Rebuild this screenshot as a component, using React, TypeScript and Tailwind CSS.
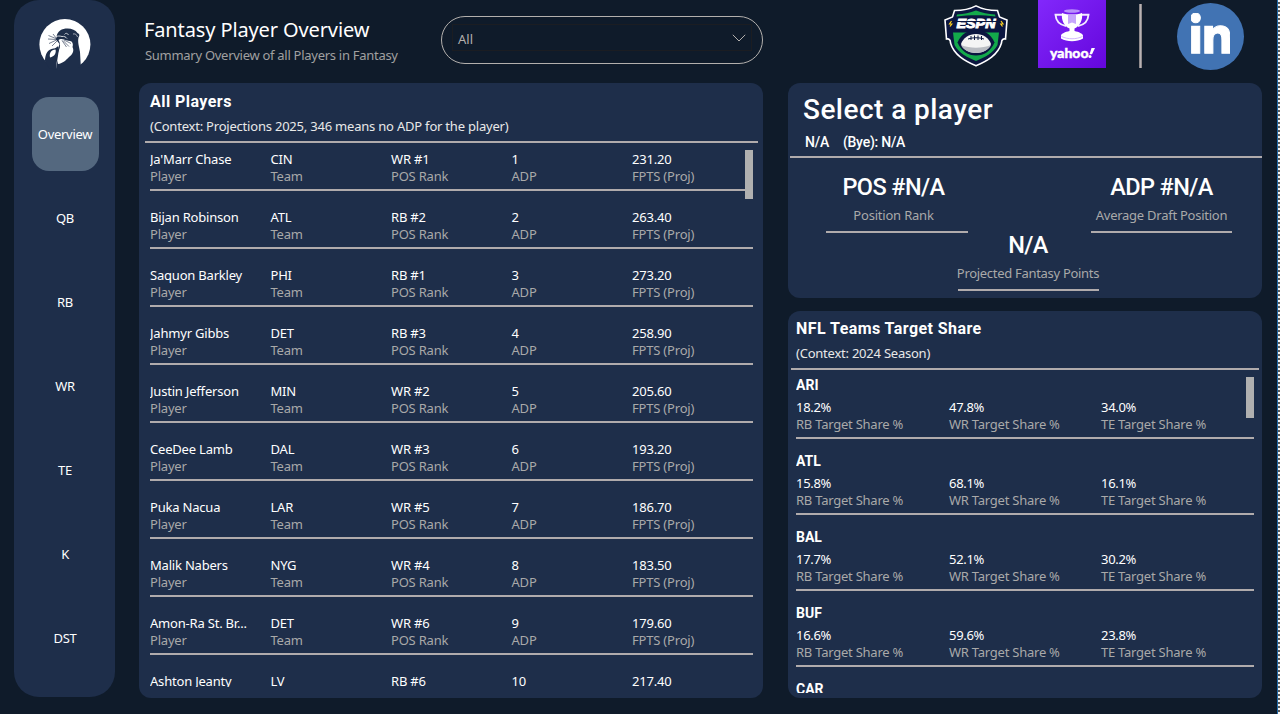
import React from "react";
import { FaLinkedinIn } from "react-icons/fa";

const players = [
  ["Ja'Marr Chase", "CIN", "WR #1", "1", "231.20"],
  ["Bijan Robinson", "ATL", "RB #2", "2", "263.40"],
  ["Saquon Barkley", "PHI", "RB #1", "3", "273.20"],
  ["Jahmyr Gibbs", "DET", "RB #3", "4", "258.90"],
  ["Justin Jefferson", "MIN", "WR #2", "5", "205.60"],
  ["CeeDee Lamb", "DAL", "WR #3", "6", "193.20"],
  ["Puka Nacua", "LAR", "WR #5", "7", "186.70"],
  ["Malik Nabers", "NYG", "WR #4", "8", "183.50"],
  ["Amon-Ra St. Br...", "DET", "WR #6", "9", "179.60"],
  ["Ashton Jeanty", "LV", "RB #6", "10", "217.40"],
];
const playerLabels = ["Player", "Team", "POS Rank", "ADP", "FPTS (Proj)"];

const teams = [
  ["ARI", "18.2%", "47.8%", "34.0%"],
  ["ATL", "15.8%", "68.1%", "16.1%"],
  ["BAL", "17.7%", "52.1%", "30.2%"],
  ["BUF", "16.6%", "59.6%", "23.8%"],
  ["CAR"],
];
const teamLabels = ["RB Target Share %", "WR Target Share %", "TE Target Share %"];

const nav = ["Overview", "QB", "RB", "WR", "TE", "K", "DST"];

function OtterLogo() {
  return (
    <svg className="h-[52px] w-[52px]" viewBox="0 0 52 52">
      <circle cx="25.900" cy="26.500" r="25.500" fill="#fff" />
      <path
        d="M17.500 19C18 13 23 10.500 28.500 10.500C33 10.500 36.500 12 38.500 15C40.500 15.500 41 17.500 39.500 19.500C38.500 24 40 28 41 34L41.800 48L36 52H18L17.700 44C17.500 37 19 31 20.500 26L17 21.500Z"
        fill="#1e2e4a"
      />
      <path
        d="M19.500 22C21 20.500 23 21 25 21.500C28 22.500 31 23 32.500 23.500C34 25 34.200 27 33.500 29C35.500 33 33.500 36.500 30 39C27 42 24 45.500 19 46C17.500 42 18 37 20 32C21.500 29 21.500 25.500 19.500 22Z"
        fill="#fff"
      />
      <path d="M6 43C6 36 9 31 14.500 30.500C18 31 17.500 27.500 19.500 29C20 33 19 38 17.500 45L18 52L10 50Z" fill="#1e2e4a" />
      <path d="M11 39.500C10 35.500 12 31.800 16.500 31.500C17.500 35 15.500 38.500 11 39.500Z" fill="#fff" />
      <path d="M17 19C18.500 17.500 21 18 23 18.500C25 18 27 19 28 20.500" stroke="#fff" strokeWidth=".8" fill="none" />
      <path
        d="M18 21L9.500 17.500M17.500 21.500L9 21M17.500 22L10 25.500M18.500 22.500L13 28M17.500 20.500L14 16M25 22L32 25.500M24 22.500L30 28.500M23 22.500L27.500 29"
        stroke="#1e2e4a"
        strokeWidth=".6"
        fill="none"
      />
      <path d="M25.500 16.500C26.500 14.800 28.500 15 29.500 17" stroke="#fff" strokeWidth=".7" fill="none" />
      <path d="M34 16C36 15.500 38 16.500 38.500 19" stroke="#fff" strokeWidth=".6" fill="none" />
    </svg>
  );
}

function EspnLogo() {
  return (
    <svg className="h-[62px] w-[66px]" viewBox="0 0 66 62">
      <path
        d="M33 .9C39 4 47 5.500 54.500 5.500L56.500 12L64 15L62.500 34C60 33.500 58.500 35 58.500 38C55 50 44 56 33 60.800C22 56 11 50 7.500 38C7.500 35 6 33.500 3.500 34L2 15L9.500 12L11.500 5.500C19 5.500 27 4 33 .9Z"
        fill="#0b1640"
        stroke="#fff"
        strokeWidth="1.600"
      />
      <path d="M14 9.500C21 9 27 8 33 5.500C39 8 45 9 52 9.500L52.500 11.500C40 9.800 26 9.800 13.500 11.500Z" fill="#13a94b" />
      <path d="M10 27.500H56L54.500 40C50 48.500 42 52 33 56C24 52 16 48.500 11.500 40Z" fill="#13a94b" />
      <path d="M14.500 37.500C18 29 25 25 33 25C41 25 48 29 51.500 37.500C48 46 41 50.500 33 50.500C25 50.500 18 46 14.500 37.500Z" fill="#0b1640" />
      <path d="M18 39C20 33 26 29 33 29C40 29 46 33 48 39C46 44.500 40 48 33 48C26 48 20 44.500 18 39Z" fill="#f4f4f4" />
      <path d="M18 40C27 43.500 39 43.500 48 40C46 44.500 40 48 33 48C26 48 20 44.500 18 40Z" fill="#b9bcc2" />
      <path d="M25 34C30 32.300 36 32.300 41 34M28 31V35M31.500 30.500V35M35 30.500V35M38.500 31V35" stroke="#0b1640" strokeWidth="1" fill="none" />
      <path d="M10 12.500H56L57 26.500C41 23.500 25 23.500 9 26.500Z" fill="#0b1640" />
      <text
        x="33"
        y="22.500"
        textAnchor="middle"
        fontFamily="Liberation Sans, sans-serif"
        fontStyle="italic"
        fontWeight="700"
        fontSize="13"
        textLength="39"
        lengthAdjust="spacingAndGlyphs"
        fill="#fff"
        stroke="#fff"
        strokeWidth=".9"
      >
        ESPN
      </text>
      <path d="M13 16.500H54" stroke="#0b1640" strokeWidth="1" />
      <path d="M8.500 16L6.500 19H8.800L7 21.500M58 16L60 19H57.800L59.500 21.500" stroke="#ffd21f" strokeWidth="1.200" fill="none" />
    </svg>
  );
}

function YahooLogo() {
  return (
    <svg className="h-[68px] w-[68px]" viewBox="0 0 68 68">
      <defs>
        <linearGradient id="violet" x1="0" y1="0" x2="1" y2="1">
          <stop offset="0" stopColor="#8228fb" />
          <stop offset="1" stopColor="#6406dc" />
        </linearGradient>
      </defs>
      <rect width="68" height="68" fill="url(#violet)" />
      <ellipse cx="34" cy="11" rx="8" ry="1.700" fill="#b992fb" />
      <path d="M24.500 14.800H17.500C18 22 22 25 28 26M43.500 14.800H50.500C50 22 46 25 40 26" fill="none" stroke="#f3ecff" strokeWidth="1.900" />
      <path d="M24 13C30 15 38 15 44 13C45 20 42 26 36.500 28.500V31C41 32 44.500 33.500 45 35.500V38.500C39 42 29 42 23 38.500V35.500C23.500 33.500 27 32 31.500 31V28.500C26 26 23 20 24 13Z" fill="#fff" />
      <path d="M30 14.500H38V24L34 22.500L30 24Z" fill="#c6a6fc" />
      <path d="M23.500 36.500C30 39.500 38 39.500 44.500 36.500" stroke="#c6a6fc" strokeWidth=".8" fill="none" />
      <text
        x="12"
        y="57.500"
        fontFamily="Lato, sans-serif"
        fontWeight="900"
        fontSize="13.500"
        textLength="38.500"
        lengthAdjust="spacingAndGlyphs"
        fill="#fff"
        stroke="#fff"
        strokeWidth=".4"
      >
        yahoo
      </text>
      <path d="M53.500 48H57L54 54.300H51.500Z" fill="#fff" />
      <circle cx="52" cy="56.500" r="1.500" fill="#fff" />
    </svg>
  );
}

function Stat({ value, label, className }: { value: string; label: string; className: string }) {
  return (
    <div className={"flex h-[62px] flex-col items-center border-b-2 border-[#b0abac] " + className}>
      <div className="mt-px font-[Roboto,sans-serif] text-[23.5px] leading-[30px] font-medium tracking-[-0.6px] text-white">{value}</div>
      <div className="mt-[5px] text-[13px] leading-[17px] whitespace-nowrap text-[#a9a9a9]">{label}</div>
    </div>
  );
}

export default function App() {
  return (
    <div className="flex h-[714px] w-[1280px] overflow-hidden bg-[#0f1b2a] font-['Noto_Sans',sans-serif] text-[13px] text-white">
      <nav className="ml-[14px] flex h-[697px] w-[101px] shrink-0 flex-col items-center rounded-[25px] bg-[#1e2e4a] pt-[18px]">
        <OtterLogo />
        <div className="mt-[27px] ml-px flex flex-col gap-[10px]">
          {nav.map((n, i) => (
            <button
              key={n}
              className={
                "flex h-[74px] w-[67px] items-center justify-center rounded-[17px] pt-[2px] text-[13px] tracking-[-0.3px] " +
                (i === 0 ? "bg-[#54687f]" : "")
              }
            >
              {n}
            </button>
          ))}
        </div>
      </nav>

      <div className="ml-6 flex w-[624px] shrink-0 flex-col">
        <header className="flex h-[83px] shrink-0 justify-between">
          <div className="pt-[15px] pl-[5px]">
            <h1 className="text-[20px] leading-[30px] tracking-[-0.12px] whitespace-nowrap">Fantasy Player Overview</h1>
            <p className="mt-[2px] pl-px text-[13px] leading-[17px] tracking-[-0.28px] whitespace-nowrap text-[#a0a0a0]">
              Summary Overview of all Players in Fantasy
            </p>
          </div>
          <div className="mt-4 flex h-12 w-[322px] rounded-[24px] border border-[#b3b0ad] px-[10px] pt-[7px]">
            <div className="flex h-[27px] w-full items-center justify-between border border-[#1b1d22] pr-[5px] pl-[5px] text-[#b3b0ad]">
              <span className="pt-[4px]">All</span>
              <svg className="h-[8px] w-[14px]" viewBox="0 0 14 8" fill="none" stroke="#b3b0ad">
                <path d="M.8 .8L7 7L13.200 .8" />
              </svg>
            </div>
          </div>
        </header>

        <section className="flex h-[615px] flex-col rounded-xl bg-[#1e2e4a]">
          <div className="mr-[5px] ml-[6px] h-[60px] shrink-0 border-b-2 border-[#b0abac] pt-[9px] pl-[5px]">
            <h2 className="font-[Roboto,sans-serif] text-[16px] leading-5 font-bold tracking-[0.45px]">All Players</h2>
            <p className="mt-[6px] leading-[17px] tracking-[-0.21px] text-[#e8e8e8]">
              (Context: Projections 2025, 346 means no ADP for the player)
            </p>
          </div>
          <div className="relative mr-[10px] ml-[11px] h-[544px] overflow-hidden pt-[8px]">
            {players.map((p) => (
              <div key={p[0]} className="mb-[18px] grid h-10 grid-cols-[120.5px_120.5px_120.5px_120.5px_1fr] border-b-2 border-[#b0abac]">
                {p.map((v, i) => (
                  <div key={i} className="leading-[17px] whitespace-nowrap">
                    <div className="tracking-[-0.2px]">{v}</div>
                    <div className="tracking-[-0.2px] text-[#a9a9a9]">{playerLabels[i]}</div>
                  </div>
                ))}
              </div>
            ))}
            <div className="absolute top-[7px] right-0 h-[49px] w-2 bg-[#b0b0b0]" />
          </div>
        </section>
      </div>

      <div className="ml-[25px] flex w-[474px] shrink-0 flex-col">
        <header className="flex h-[83px] shrink-0">
          <div className="ml-[155px] pt-[5px]">
            <EspnLogo />
          </div>
          <div className="ml-[29px]">
            <YahooLogo />
          </div>
          <div className="mt-1 ml-[33px] h-16 w-[3px] border-x border-[#8f8a8c] bg-[#b8b2b4]" />
          <div className="mt-[3px] ml-[35px] flex h-[67px] w-[67px] items-center justify-center rounded-full bg-[#4173b3]">
            <FaLinkedinIn className="mb-[1px] h-[46px] w-[39px] text-white" preserveAspectRatio="none" stroke="currentColor" strokeWidth="12" />
          </div>
        </header>

        <section className="flex h-[215px] shrink-0 flex-col rounded-xl bg-[#1e2e4a] font-[Roboto,sans-serif]">
          <div className="ml-[2px] h-[75px] shrink-0 border-b-2 border-[#b0abac] pt-[10px] pl-[13px]">
            <h2 className="text-[28px] leading-[34px] font-medium tracking-[0.45px]">Select a player</h2>
            <div className="mt-[6px] flex gap-[14px] pl-[2px] text-[14px] leading-[18px] font-medium tracking-[-0.25px]">
              <span>N/A</span>
              <span>(Bye): N/A</span>
            </div>
          </div>
          <div className="flex pl-[38px] font-['Noto_Sans',sans-serif]">
            <Stat value="POS #N/A" label="Position Rank" className="mt-[13px] -mr-[10px] w-[142px] pr-[7px] tracking-[-0.2px]" />
            <Stat value="N/A" label="Projected Fantasy Points" className="mt-[71px] -mr-[8px] w-[141px] pr-px tracking-[-0.3px]" />
            <Stat value="ADP #N/A" label="Average Draft Position" className="mt-[13px] w-[141px] tracking-[-0.25px]" />
          </div>
        </section>

        <section className="mt-[13px] flex h-[387px] flex-col rounded-xl bg-[#1e2e4a]">
          <div className="mr-[3px] ml-[3px] h-[59px] shrink-0 border-b-2 border-[#b0abac] pt-[8px] pl-[5px]">
            <h2 className="font-[Roboto,sans-serif] text-[16px] leading-5 font-bold tracking-[0.43px]">NFL Teams Target Share</h2>
            <p className="mt-[6px] leading-[17px] tracking-[-0.23px] text-[#e8e8e8]">(Context: 2024 Season)</p>
          </div>
          <div className="relative mx-2 h-[323px] overflow-hidden pt-[6px]">
            {teams.map(([name, ...shares]) => (
              <div key={name} className="mb-[13px] h-[63px] border-b-2 border-[#b0abac]">
                <div className="font-[Roboto,sans-serif] text-[14px] leading-[18px] font-bold">{name}</div>
                <div className="mt-[5px] grid grid-cols-[153px_152px_1fr] leading-[17px]">
                  {shares.map((share, i) => (
                    <div key={i} className="whitespace-nowrap">
                      <div className="tracking-[-0.3px]">{share}</div>
                      <div className="tracking-[-0.24px] text-[#a9a9a9]">{teamLabels[i]}</div>
                    </div>
                  ))}
                </div>
              </div>
            ))}
            <div className="absolute top-[7px] right-0 h-[41px] w-2 bg-[#b0b0b0]" />
          </div>
        </section>
      </div>

      <div className="ml-auto h-full w-[3px] border-l border-[#1f6aa8] bg-[repeating-linear-gradient(#f5f5f5_0_2px,#5a5a5a_2px_4px)]" />
    </div>
  );
}
